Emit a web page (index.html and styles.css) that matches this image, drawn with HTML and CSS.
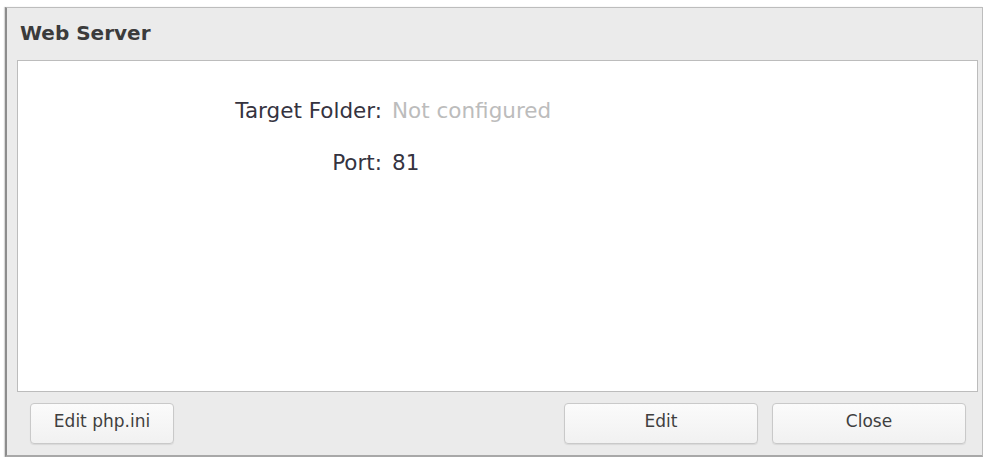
FILE: index.html
```html
<!DOCTYPE html>
<html>
<head>
<meta charset="utf-8">
<link rel="stylesheet" href="styles.css">
</head>
<body>
<div class="dialog">
  <div class="title">Web Server</div>
  <div class="content">
    <div class="form">
      <div class="label">Target Folder:</div>
      <div class="value muted">Not configured</div>
      <div class="label">Port:</div>
      <div class="value">81</div>
    </div>
  </div>
  <div class="footer">
    <button class="btn btn-php">Edit php.ini</button>
    <div class="spacer"></div>
    <button class="btn btn-wide">Edit</button>
    <button class="btn btn-wide">Close</button>
  </div>
</div>
</body>
</html>
```

FILE: styles.css
```css
html, body {
  margin: 0;
  padding: 0;
  background: #ffffff;
}

body {
  font-family: "DejaVu Sans", Verdana, sans-serif;
}

.dialog {
  box-sizing: border-box;
  margin: 7px 0 0 5px;
  width: 978px;
  height: 450px;
  background: #ebebeb;
  border: 1px solid #bdbdbd;
  border-left: 2px solid #8c8c8c;
  border-bottom: 2px solid #a8a8a8;
  display: flex;
  flex-direction: column;
  box-shadow: -1px 0 1px rgba(0,0,0,0.15);
}

.title {
  box-sizing: border-box;
  height: 52px;
  padding: 13px 0 0 13px;
  font-size: 20px;
  line-height: 24px;
  font-weight: bold;
  color: #3b3b3b;
}

.content {
  box-sizing: border-box;
  height: 332px;
  margin: 0 4px 0 10px;
  background: #ffffff;
  border: 1px solid #bcbcbc;
  padding-top: 38px;
}

.form {
  display: grid;
  grid-template-columns: 364px auto;
  column-gap: 10px;
  row-gap: 28px;
  font-size: 21.5px;
  line-height: 24px;
  color: #35333f;
}

.label {
  text-align: right;
}

.value.muted {
  color: #bcbcbc;
}

.footer {
  display: flex;
  align-items: flex-start;
  padding: 11px 16px 0 23px;
  gap: 14px;
}

.spacer {
  flex: 1;
}

.btn {
  box-sizing: border-box;
  height: 41px;
  border: 1px solid #c9c9c9;
  border-radius: 4px;
  background: linear-gradient(#fbfbfb, #f1f1f1);
  box-shadow: 0 1px 1px rgba(0,0,0,0.08);
  font-family: "DejaVu Sans", Verdana, sans-serif;
  font-size: 17px;
  color: #3f3f3f;
  padding: 0 0 5px 0;
}

.btn-php {
  width: 144px;
}

.btn-wide {
  width: 194px;
}
```
